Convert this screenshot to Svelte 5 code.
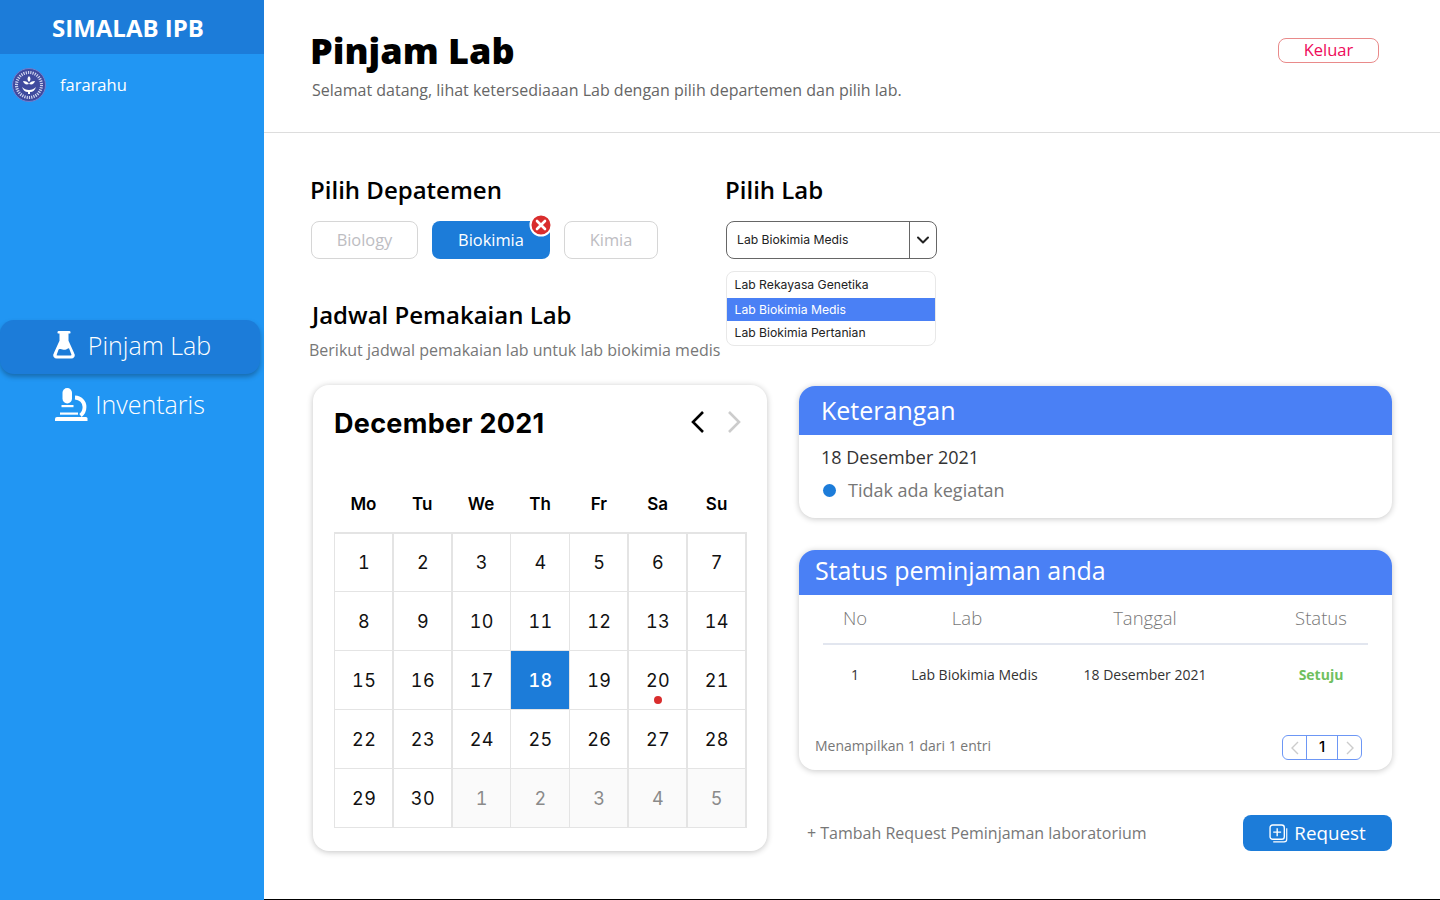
<script>
  const days = ['Mo', 'Tu', 'We', 'Th', 'Fr', 'Sa', 'Su']
  const current = Array.from({ length: 30 }, (_, i) => ({ n: i + 1, muted: false }))
  const next = [1, 2, 3, 4, 5].map(n => ({ n, muted: true }))
  const cells = [...current, ...next]
  const selected = 18
  const marked = 20

  const labs = ['Lab Rekayasa Genetika', 'Lab Biokimia Medis', 'Lab Biokimia Pertanian']
</script>

<div class="page">
  <aside>
    <div class="brand">SIMALAB IPB</div>
    <div class="user">
      <svg class="logo" viewBox="0 0 34 34" aria-hidden="true">
        <circle cx="17" cy="17" r="16.5" fill="#3f4a9e" stroke="#6f7fd0" />
        <circle cx="17" cy="17" r="12.5" fill="none" stroke="#cfd4ef" stroke-width="3" stroke-dasharray="1.2 1.1" />
        <path d="M17 8c2 2 2 4 0 6-2-2-2-4 0-6zM11 13c3 0 5 1 6 3-3 1-5 0-6-3zM23 13c-3 0-5 1-6 3 3 1 5 0 6-3zM10 19c2 2 4 3 7 3s5-1 7-3c-1 3-3 5-6 5v2h-2v-2c-3 0-5-2-6-5z" fill="#fff" />
      </svg>
      <span>fararahu</span>
    </div>
    <nav>
      <div class="nav-item active">
        <svg class="flask" viewBox="0 0 22 28" aria-hidden="true">
          <rect x="4.5" y="0" width="13" height="2.6" rx="1.2" fill="#fff" />
          <path d="M7.5 2v8L1.6 23a2.4 2.4 0 0 0 2.2 3.6h14.4a2.4 2.4 0 0 0 2.2-3.6L14.5 10V2z" fill="#fff" stroke="#fff" stroke-width="2" stroke-linejoin="round" />
          <path d="M5.6 18.5c2.5-1.6 4.500.8 6.500.3 1.500-.4 2.400-1.300 3.900-1.500l2.400 6.200c.2.500-.1.900-.6.900H4.400c-.5 0-.8-.4-.6-.9z" fill="#1c7cd9" />
        </svg>
        <span>Pinjam Lab</span>
      </div>
      <div class="nav-item">
        <svg class="scope" viewBox="0 0 33 33" aria-hidden="true">
          <rect x="7.500" y="0" width="9.500" height="15.500" rx="4.700" fill="#fff" />
          <rect x="6.500" y="17" width="12" height="2.200" fill="#fff" />
          <path d="M20 9.500c5.500.2 9.500 4.400 9.500 9.500 0 3.500-1.600 6.500-4 8.500" fill="none" stroke="#fff" stroke-width="3.800" />
          <rect x="5" y="24.500" width="18" height="2.200" fill="#fff" />
          <path d="M2 29h29a1.500 1.500 0 0 1 1.500 1.500V33H0v-2a2 2 0 0 1 2-2z" fill="#fff" />
        </svg>
        <span>Inventaris</span>
      </div>
    </nav>
  </aside>

  <main>
    <header>
      <div>
        <h1>Pinjam Lab</h1>
        <p>Selamat datang, lihat ketersediaaan Lab dengan pilih departemen dan pilih lab.</p>
      </div>
      <button class="logout">Keluar</button>
    </header>

    <div class="content">
      <div class="filters">
        <div class="filter-left">
          <h2>Pilih Depatemen</h2>
          <div class="chips">
            <button class="chip biology">Biology</button>
            <button class="chip on">
              Biokimia
              <span class="remove">
                <svg viewBox="0 0 24 24" aria-hidden="true">
                  <circle cx="12" cy="12" r="10.500" fill="#d92d2d" stroke="#fff" stroke-width="2" />
                  <path d="M8 8l8 8M16 8l-8 8" stroke="#fff" stroke-width="2.600" stroke-linecap="round" />
                </svg>
              </span>
            </button>
            <button class="chip kimia">Kimia</button>
          </div>
          <h2 class="schedule">Jadwal Pemakaian Lab</h2>
          <p class="hint">Berikut jadwal pemakaian lab untuk lab biokimia medis</p>
        </div>
        <div class="filter-right">
          <h2>Pilih Lab</h2>
          <div class="picker">
            <div class="select">
              <span class="value">Lab Biokimia Medis</span>
              <span class="caret">
                <svg viewBox="0 0 14 14" aria-hidden="true">
                  <path d="M2 4.500l5 5 5-5" fill="none" stroke="#222" stroke-width="2" stroke-linecap="round" stroke-linejoin="round" />
                </svg>
              </span>
            </div>
            <ul class="menu">
              {#each labs as lab, i}
                <li class:current={i === 1}>{lab}</li>
              {/each}
            </ul>
          </div>
        </div>
      </div>

      <div class="panels">
        <section class="calendar">
          <div class="cal-head">
            <h3>December 2021</h3>
            <div class="arrows">
              <svg viewBox="0 0 14 24" aria-hidden="true">
                <path d="M12 2L2 12l10 10" fill="none" stroke="#000" stroke-width="2.600" />
              </svg>
              <svg viewBox="0 0 14 24" aria-hidden="true">
                <path d="M2 2l10 10L2 22" fill="none" stroke="#ccc" stroke-width="2.600" />
              </svg>
            </div>
          </div>
          <div class="weekdays">
            {#each days as d}
              <span>{d}</span>
            {/each}
          </div>
          <div class="grid">
            {#each cells as c}
              <div
                class="cell"
                class:muted={c.muted}
                class:selected={!c.muted && c.n === selected}
              >
                {c.n}
                {#if !c.muted && c.n === marked}
                  <i class="dot"></i>
                {/if}
              </div>
            {/each}
          </div>
        </section>

        <div class="side">
          <section class="card info">
            <div class="card-title first">Keterangan</div>
            <div class="info-body">
              <div class="info-date">18 Desember 2021</div>
              <div class="info-row"><i></i>Tidak ada kegiatan</div>
            </div>
          </section>

          <section class="card status">
            <div class="card-title second">Status peminjaman anda</div>
            <div class="table">
              <div class="row head">
                <span>No</span>
                <span class="lab-head">Lab</span>
                <span>Tanggal</span>
                <span class="last">Status</span>
              </div>
              <div class="row body">
                <span>1</span>
                <span>Lab Biokimia Medis</span>
                <span>18 Desember 2021</span>
                <span class="last ok">Setuju</span>
              </div>
            </div>
            <div class="foot">
              <span>Menampilkan 1 dari 1 entri</span>
              <div class="pager">
                <span class="nav">
                  <svg viewBox="0 0 10 16" aria-hidden="true"><path d="M8 2L2 8l6 6" fill="none" stroke="#ccc" stroke-width="1.400" /></svg>
                </span>
                <span class="num">1</span>
                <span class="nav">
                  <svg viewBox="0 0 10 16" aria-hidden="true"><path d="M2 2l6 6-6 6" fill="none" stroke="#ccc" stroke-width="1.400" /></svg>
                </span>
              </div>
            </div>
          </section>

          <div class="request-row">
            <span>+ Tambah Request Peminjaman laboratorium</span>
            <button class="request">
              <svg viewBox="0 0 18 18" aria-hidden="true">
                <rect x="1" y="1" width="13.500" height="13.500" rx="2.500" fill="none" stroke="#fff" stroke-width="1.300" />
                <path d="M7.750 4v7.500M4 7.750h7.500" stroke="#fff" stroke-width="1.300" />
                <path d="M16.800 4v10.500a2.500 2.500 0 0 1-2.500 2.500H4" fill="none" stroke="#fff" stroke-width="1.100" />
              </svg>
              Request
            </button>
          </div>
        </div>
      </div>
    </div>
  </main>
</div>

<style>
  :global(body) {
    font-family: 'Open Sans', sans-serif;
    background: #fff;
  }

  .page {
    display: flex;
    width: 1440px;
    height: 900px;
    overflow: hidden;
  }

  aside {
    flex: 0 0 264px;
    background: #2196f3;
    color: #fff;
  }

  .brand {
    height: 54px;
    padding-right: 8px;
    background: #1c7cd9;
    font-size: 24px;
    font-weight: 700;
    line-height: 55px;
    text-align: center;
  }

  .user {
    display: flex;
    align-items: center;
    gap: 14px;
    padding: 14px 12px 0;
    font-size: 16.500px;
    font-weight: 500;
    line-height: 34px;
  }

  .logo {
    width: 34px;
    height: 34px;
  }

  nav {
    margin-top: 218px;
  }

  .nav-item {
    display: flex;
    align-items: center;
    justify-content: center;
    width: 260px;
    height: 54px;
    gap: 13px;
    box-sizing: border-box;
    font-size: 25px;
    font-weight: 300;
  }

  .nav-item.active {
    background: #1c7cd9;
    border-radius: 14px;
    box-shadow: 0 3px 5px rgba(0, 0, 0, 0.28);
    padding: 0 0 5px 4px;
  }

  .nav-item:not(.active) {
    margin-top: 5px;
    gap: 7px;
    padding-bottom: 4px;
  }

  .flask {
    width: 22px;
    height: 28px;
  }

  .scope {
    width: 33px;
    height: 33px;
  }

  main {
    flex: 1;
    box-sizing: border-box;
    border-bottom: 1px solid #000;
  }

  header {
    display: flex;
    justify-content: space-between;
    align-items: flex-start;
    box-sizing: border-box;
    height: 133px;
    padding: 26px 61px 0 46px;
    border-bottom: 1px solid #ddd;
  }

  h1 {
    margin: 0;
    color: #000;
    font-size: 36px;
    font-weight: 800;
    line-height: 50px;
  }

  header p {
    margin: 3px 0 0 2px;
    color: #666;
    font-size: 16px;
    line-height: 22px;
  }

  .logout {
    box-sizing: border-box;
    width: 101px;
    height: 25px;
    margin-top: 12px;
    padding: 0 0 2px;
    border: 1.500px solid #e98a8a;
    border-radius: 8px;
    background: #fff;
    color: #ee0a5a;
    font: 500 16.500px/20px 'Open Sans', sans-serif;
  }

  .content {
    padding: 41px 48px 0 46px;
  }

  .filters {
    display: flex;
  }

  .filter-left {
    flex: 0 0 415px;
  }

  h2 {
    margin: 0;
    color: #000;
    font-size: 24px;
    font-weight: 600;
    line-height: 32px;
  }

  .chips {
    display: flex;
    gap: 14px;
    margin: 15px 0 0 1px;
  }

  .chip {
    box-sizing: border-box;
    height: 38px;
    padding: 0;
    border: 1.500px solid #d6d6d6;
    border-radius: 8px;
    background: #fff;
    color: #bdbdc2;
    font: 500 16.400px/22px 'Open Sans', sans-serif;
  }

  .biology {
    width: 107px;
  }

  .kimia {
    width: 94px;
  }

  .chip.on {
    position: relative;
    width: 118px;
    border: 0;
    background: #1c7cd9;
    color: #fff;
  }

  .remove {
    position: absolute;
    top: -8px;
    right: -3px;
    width: 24px;
    height: 24px;
  }

  .remove svg {
    display: block;
  }

  .schedule {
    margin: 40px 0 0 2px;
  }

  .hint {
    margin: 8px 0 0 -1px;
    color: #777;
    font-size: 16px;
    line-height: 22px;
    white-space: nowrap;
  }

  .picker {
    position: relative;
    margin: 15px 0 0 1px;
    width: 211px;
  }

  .select {
    display: flex;
    box-sizing: border-box;
    height: 38px;
    border: 1.500px solid #666;
    border-radius: 8px;
    font: 400 12.200px/35px Inter, sans-serif;
    color: #222;
  }

  .value {
    flex: 1;
    padding-left: 10px;
  }

  .caret {
    display: flex;
    align-items: center;
    justify-content: center;
    box-sizing: border-box;
    width: 27px;
    border-left: 1.500px solid #666;
  }

  .caret svg {
    width: 14px;
    height: 14px;
  }

  .menu {
    position: absolute;
    top: 50px;
    left: 0;
    box-sizing: border-box;
    width: 210px;
    height: 75px;
    margin: 0;
    padding: 0;
    overflow: hidden;
    list-style: none;
    border: 1.500px solid #e8e8e8;
    border-radius: 8px;
    background: #fff;
    font: 400 12.200px/24px Inter, sans-serif;
    color: #222;
  }

  .menu li {
    height: 23px;
    padding-left: 7.500px;
  }

  .menu li:first-child {
    height: 26px;
    line-height: 25px;
  }

  .menu li.current {
    background: #4a80f5;
    color: #fff;
  }

  .panels {
    display: flex;
    gap: 32px;
    margin-top: 24px;
    align-items: flex-start;
  }

  .calendar {
    box-sizing: border-box;
    flex: 0 0 454px;
    height: 466px;
    margin-left: 3px;
    padding: 0 21px;
    border-radius: 16px;
    background: #fff;
    box-shadow: 0 1px 6px rgba(0, 0, 0, 0.24);
    font-family: Inter, sans-serif;
  }

  .cal-head {
    display: flex;
    align-items: center;
    justify-content: space-between;
    height: 76px;
  }

  h3 {
    margin: 0;
    color: #000;
    font-size: 27px;
    font-weight: 700;
    letter-spacing: 0.3px;
  }

  .arrows {
    display: flex;
    gap: 22px;
    padding: 0 5px 2px 0;
  }

  .arrows svg {
    width: 14px;
    height: 24px;
  }

  .weekdays {
    display: grid;
    grid-template-columns: repeat(7, 1fr);
    margin-top: 31px;
    color: #000;
    font-size: 17px;
    font-weight: 600;
    line-height: 24px;
    text-align: center;
  }

  .grid {
    display: grid;
    grid-template-columns: repeat(7, 1fr);
    gap: 1.500px;
    margin: 16px -0.500px 0;
    padding: 1.500px;
    height: 296px;
    box-sizing: border-box;
    background: #e4e4e4;
  }

  .cell {
    position: relative;
    display: flex;
    align-items: center;
    justify-content: center;
    padding: 1px 0 0 1px;
    background: #fff;
    color: #111;
    font-size: 18px;
    font-weight: 400;
    font-variant-numeric: tabular-nums;
    letter-spacing: 0.4px;
  }

  .cell.muted {
    background: #fafafa;
    color: #8a8a8a;
  }

  .cell.selected {
    background: #1c7cd9;
    color: #fff;
    font-weight: 500;
  }

  .dot {
    position: absolute;
    left: 50%;
    bottom: 5px;
    width: 8px;
    height: 8px;
    margin-left: -4px;
    border-radius: 50%;
    background: #d92d2d;
  }

  .side {
    flex: 0 0 593px;
    margin-top: 1px;
  }

  .card {
    overflow: hidden;
    border-radius: 16px;
    background: #fff;
    box-shadow: 0 1px 6px rgba(0, 0, 0, 0.22);
  }

  .card-title {
    background: #4a80f5;
    color: #fff;
    font-size: 25px;
    font-weight: 500;
  }

  .card-title.first {
    height: 49px;
    padding-left: 22px;
    line-height: 49px;
  }

  .card-title.second {
    height: 45px;
    padding-left: 16px;
    line-height: 41px;
  }

  .info {
    height: 132px;
  }

  .info-body {
    padding: 8px 22px 0;
  }

  .info-date {
    color: #333;
    font-size: 18px;
    line-height: 28px;
  }

  .info-row {
    display: flex;
    align-items: center;
    margin-top: 5px;
    color: #777;
    font-size: 18px;
    line-height: 28px;
  }

  .info-row i {
    width: 13px;
    height: 13px;
    margin: 0 12px 0 2px;
    border-radius: 50%;
    background: #1c7cd9;
  }

  .status {
    height: 220px;
    margin-top: 32px;
  }

  .table {
    margin: 0 24px;
  }

  .row {
    display: grid;
    grid-template-columns: 64px 175px 166px 140px;
    text-align: center;
  }

  .row .last {
    padding-left: 46px;
  }

  .head {
    height: 48px;
    border-bottom: 2px solid #e2e6ef;
    color: #777;
    font-size: 18.500px;
    font-weight: 300;
    line-height: 46px;
  }

  .lab-head {
    padding-right: 15px;
  }

  .body {
    margin-top: 20px;
    color: #333;
    font-size: 14px;
    line-height: 20px;
  }

  .ok {
    color: #6fbf5f;
    font-weight: 700;
  }

  .foot {
    display: flex;
    align-items: center;
    justify-content: space-between;
    margin-top: 45px;
    padding: 0 30px 0 16px;
    color: #777;
    font-size: 14px;
  }

  .pager {
    display: flex;
    box-sizing: border-box;
    width: 80px;
    height: 25px;
    margin-top: 5px;
    border: 1.500px solid #6d97f5;
    border-radius: 6px;
  }

  .nav {
    display: flex;
    align-items: center;
    justify-content: center;
    width: 23px;
  }

  .nav svg {
    width: 10px;
    height: 16px;
  }

  .num {
    flex: 1;
    border-left: 1.500px solid #6d97f5;
    border-right: 1.500px solid #6d97f5;
    color: #000;
    font: 500 15px/22px Inter, sans-serif;
    text-align: center;
  }

  .request-row {
    display: flex;
    align-items: center;
    justify-content: space-between;
    margin-top: 45px;
    padding-left: 8px;
    color: #777;
    font-size: 16px;
  }

  .request {
    display: flex;
    align-items: center;
    justify-content: center;
    gap: 6px;
    width: 149px;
    height: 36px;
    padding: 0;
    border: 0;
    border-radius: 8px;
    background: #1c7cd9;
    color: #fff;
    font: 500 18.800px/24px 'Open Sans', sans-serif;
  }

  .request svg {
    width: 19px;
    height: 19px;
  }
</style>
